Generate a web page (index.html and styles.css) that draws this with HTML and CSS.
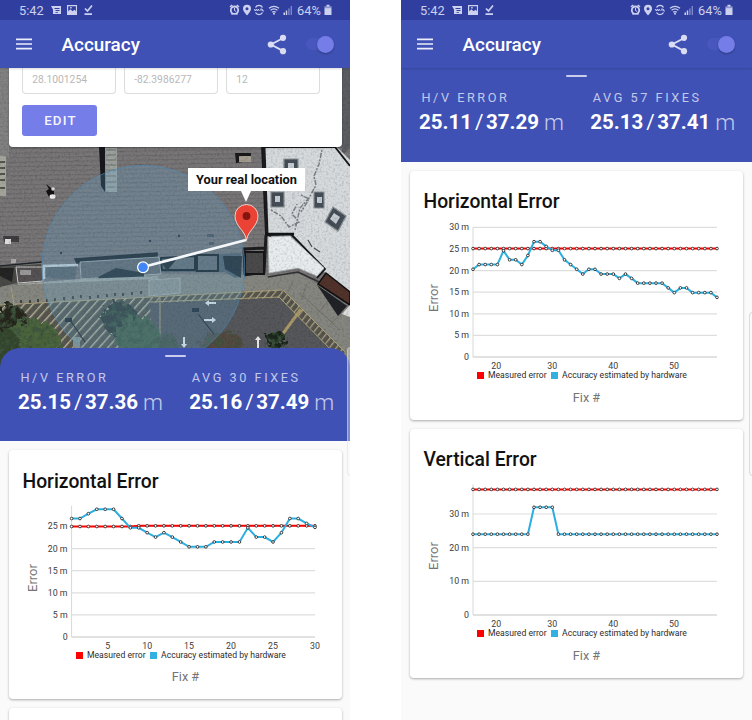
FILE: index.html
```
<!DOCTYPE html>
<html lang="en">
<head>
<meta charset="utf-8">
<title>Accuracy</title>
<link rel="stylesheet" href="styles.css">
</head>
<body>
<svg class="defs" width="0" height="0" aria-hidden="true">
  <symbol id="i-left" viewBox="0 0 42 12">
    <path d="M0 2h10v8H2V5.500zM3.500 4v1h5V4zm1 2v.9h4V6zm0 1.900v.8h2.500v-.8z" fill="currentColor" fill-rule="evenodd"/>
    <path d="M16 1h10v10H16zM17.200 2.200v5l2.300-2 2 2 2-1.500 1.400 1.500v-5zM19.200 3h1.500v1.500h-1.500z" fill="currentColor" fill-rule="evenodd"/>
    <path d="M34 4.500l2.500 2.500L41 1.500M33.500 10.200H41" fill="none" stroke="currentColor" stroke-width="1.700"/>
  </symbol>
  <symbol id="i-right" viewBox="0 0 66 12">
    <g fill="none" stroke="currentColor">
      <circle cx="5.500" cy="6.200" r="3.700" stroke-width="1.800"/>
      <path d="M1 3l2.200-2M10 3L7.800 1M2.500 10.500l1-1M8.500 10.500l-1-1" stroke-width="1.600"/>
      <path d="M5.500 4v2.500l1.700 1" stroke-width="1"/>
    </g>
    <path d="M18 .7a4 4 0 0 1 4 4C22 7.500 18 11.300 18 11.300s-4-3.800-4-6.600a4 4 0 0 1 4-4zm0 2.500a1.500 1.500 0 1 0 0 3 1.500 1.500 0 0 0 0-3z" fill="currentColor" fill-rule="evenodd"/>
    <g fill="none" stroke="currentColor">
      <path d="M26.500 3.500a4 4 0 0 1 7 0M33.500 8.500a4 4 0 0 1-7 0" stroke-width="1.300"/>
      <path d="M25.300 5l1 2 1-2 1 2 1-2 1 2M31.200 5h1.800m-1 0v2M33.600 5v2h1.400" stroke-width=".9"/>
      <path d="M40 4.300q5-4 10 0M41.600 6.300q3.400-2.700 6.800 0M43.200 8.200q1.800-1.300 3.600 0" stroke-width="1.200"/>
    </g>
    <circle cx="45" cy="9.800" r="1" fill="currentColor"/>
    <path d="M54.500 8.500H56V11h-1.500zM56.800 6.500h1.400V11h-1.400z" fill="currentColor"/>
    <path d="M59.200 4.500h1.400V11h-1.400zM61.600 2H63v9h-1.400z" fill="currentColor" opacity=".5"/>
  </symbol>
  <symbol id="i-battery" viewBox="0 0 8 12">
    <path d="M2.500.8h3v1.700h2V11h-7V2.500h2z" fill="currentColor"/>
    <path d="M.5 2.500h7v1.700h-7z" fill="#303f9f" opacity=".4"/>
  </symbol>
  <symbol id="i-menu" viewBox="0 0 16 12">
    <path d="M0 1.300h16M0 6h16M0 10.700h16" stroke="currentColor" stroke-width="1.700"/>
  </symbol>
  <symbol id="i-share" viewBox="0 0 20 21">
    <path d="M16.300 4L4 10.500l12.300 6.700" fill="none" stroke="currentColor" stroke-width="1.900"/>
    <g fill="currentColor"><circle cx="16" cy="3.800" r="3.100"/><circle cx="3.800" cy="10.500" r="3.100"/><circle cx="16" cy="17.200" r="3.100"/></g>
  </symbol>
</svg>

<main class="stage">
  <section class="phone">
    <div class="status">
      <span class="time">5:42</span><svg class="st-left"><use href="#i-left"/></svg>
      <svg class="st-right"><use href="#i-right"/></svg><span class="pct">64%</span><svg class="st-batt"><use href="#i-battery"/></svg>
    </div>
    <header class="bar">
      <svg class="menu"><use href="#i-menu"/></svg><h1>Accuracy</h1>
      <svg class="share"><use href="#i-share"/></svg><span class="switch"><i></i></span>
    </header>
    <div class="map-area">
      <svg class="map" viewBox="0 68 350 300" width="350" height="300">
        <defs>
          <pattern id="roof" width="8" height="4.500" patternUnits="userSpaceOnUse" patternTransform="rotate(-1)">
            <rect width="8" height="4.500" fill="#777576"/><rect width="8" height="1" fill="#6c6a6c"/><rect y="2.500" width="8" height=".6" fill="#7d7b7b"/>
          </pattern>
          <pattern id="bays" width="6.500" height="8" patternUnits="userSpaceOnUse" patternTransform="rotate(42)">
            <rect width="6.500" height="8" fill="#57564f"/><rect width="1.400" height="8" fill="#b5b298"/>
          </pattern>
          <pattern id="kerb" width="5.500" height="8" patternUnits="userSpaceOnUse" patternTransform="rotate(38)">
            <rect width="5.500" height="8" fill="#55544d"/><rect width="1.300" height="8" fill="#aaa183"/>
          </pattern>
          <filter id="grain" x="0" y="0" width="100%" height="100%">
            <feTurbulence type="fractalNoise" baseFrequency=".45" numOctaves="3" seed="4"/>
            <feColorMatrix values="0 0 0 0 0  0 0 0 0 0  0 0 0 0 0  1.600 0 0 0 -.7"/>
          </filter>
          <filter id="leaf" x="-10%" y="-10%" width="120%" height="120%">
            <feTurbulence type="fractalNoise" baseFrequency=".18" numOctaves="3" seed="9" result="n"/>
            <feDisplacementMap in="SourceGraphic" in2="n" scale="16" result="d"/>
            <feColorMatrix in="n" values="0 0 0 0 .05  0 0 0 0 .09  0 0 0 0 .05  3.500 0 0 0 -1.600"/>
            <feComposite operator="in" in2="d" result="s"/>
            <feMerge><feMergeNode in="d"/><feMergeNode in="s"/></feMerge>
          </filter>
        </defs>
        <rect y="68" width="350" height="300" fill="url(#roof)"/>
        <rect y="68" width="9" height="90" fill="#8a8a8b" opacity=".6"/>
        <path d="M342 68h8v80l-8 8z" fill="#5c5d60"/>
        <!-- walkway and car park -->
        <path d="M0 286L150 274 272 275 300 274 318 284 350 312V368H0z" fill="#85867f"/>
        <path d="M0 305L152 297 158 368H0z" fill="url(#bays)"/>
        <path d="M150 296l133-2 52 56v18H152z" fill="#56575b"/>
        <path d="M150 297l133-7 62 62-6 5-60-59-129 5z" fill="url(#kerb)"/>
        <path d="M150 297l133-7 62 62M150 302l129-5 57 58M0 305l151-8M160 298v38M11 287l3 18" fill="none" stroke="#aaa17b" stroke-width="1"/>
        <path d="M301 309l-19 26" stroke="#aa9968" stroke-width="3"/>
        <path d="M293 282l-5 10M307 284l-6 16M329 300l-13 15M342 312l-14 15M300 293l40 37" stroke="#6d6c65" stroke-width=".8"/>
        <path d="M21 300v3M30 300v3M38 299v3M47 299v3M55 298v3M64 297v3M73 296v3M81 295v3M90 296v3M98 295v3M107 294v3M115 293v3M123 293v3M132 292v3M141 291v3" stroke="#2a2a2a" stroke-width="1.400"/>
        <!-- white roof block -->
        <path d="M262 144h72l16 16v137l-24-23-34-39-25-2z" fill="#d6dadd"/>
        <path d="M262 147h73l15 19M262 147l4 88 25-1 34 35-8 9" fill="none" stroke="#151719" stroke-width="1.800"/>
        <path d="M264 148l3 86M266 235l-2 37-20 3M245 275l-1-26 20-1" fill="none" stroke="#1c1c1e" stroke-width="3"/>
        <path d="M268 237l22-1 34 32-7 8-19-8-29 5z" fill="#e9ecee" stroke="#b2b7bb" stroke-width=".8"/>
        <path d="M268 277l30-5 21 10 31 22" fill="none" stroke="#303132" stroke-width="1.600"/>
        <path d="M326 273l24 19v13l-32-21z" fill="#51332b" stroke="#111" stroke-width="1.500"/>
        <path d="M317 285l30 21-9 10z" fill="#202227"/>
        <path d="M342 314l8-9v12z" fill="#ddd"/>
        <g fill="#454d56" stroke="#8a9198" stroke-width="1.200">
          <path d="M284 159h14v13h-14zM271 192h13v15h-13zM314 192h10v16h-10zM333 207l13 9-8 15-13-9z"/>
        </g>
        <g fill="#c4cbd1"><path d="M288 163h6v5h-6zM275 196h5v6h-5zM317 197h5v6h-5zM334 213l6 4-4 7-6-5zM292 193h3v6h-3z"/></g>
        <g fill="none" stroke="#7d8287" stroke-width="1.500" stroke-dasharray="2 1 5 1.500">
          <path d="M322 150l-3 14-5 12 2 9-7 13-9 10-5 22M271 210l10 6 8 11 10-5-7-8 5-10M301 195l8 4-8 13"/>
        </g>
        <path d="M267 234h27M271 236l-5-3" stroke="#121416" stroke-width="2.500"/>
        <path d="M308 240l4 7M314 248l6 4" stroke="#4a4e52" stroke-width="1.200"/>
        <!-- storefront -->
        <path d="M0 267l41-3 1 15-26 4-16 4z" fill="#494946"/>
        <path d="M16 267h27v14l-25 2z" fill="#565253" stroke="#c8cbc8" stroke-width="1"/>
        <path d="M20 270h11v5H20z" fill="#999"/>
        <path d="M0 268h14l-2 14-12-6z" fill="#252424"/>
        <path d="M44 266l33-2-2 16-31-3z" fill="#5c6469"/>
        <path d="M44 279v-13l34-1" fill="none" stroke="#c6d0d0" stroke-width="2.500"/>
        <path d="M75 259l82-6v4l-80 6zM0 266l42-4" fill="#22282c" stroke="#20252a" stroke-width="1.500"/>
        <path d="M80 262l79-5 2 17-80 5z" fill="#65686c" stroke="#b0b7b9" stroke-width=".8"/>
        <path d="M98 277l18-9 28 5v5l-44 2z" fill="#293137"/>
        <path d="M161 258l80-5v23l-6 2-10-6H161z" fill="#536068"/>
        <path d="M161 258l34-2v14h-33zM197 255h21v16h-21z" fill="#666c70" stroke="#1b2227" stroke-width="2"/>
        <path d="M161 262l15-2-9 11zM223 256h19l-1 22-16-9z" fill="#232a30"/>
        <path d="M245 252h19v22h-19z" fill="#4b4a4b" stroke="#171719" stroke-width="2"/>
        <path d="M18 284l61-5 79-3v3l-79 3-62 3z" fill="#a0a4a0"/>
        <path d="M149 280l31-2v15l-31 3z" fill="#8f928e" stroke="#b0b3ae" stroke-width=".8"/>
        <!-- rooftop equipment -->
        <path d="M99 147h6v45l-4-6z" fill="#16181c"/><path d="M105 148h12v44h-11z" fill="#9da19e"/>
        <path d="M106 150h10M106 155h10M106 160h10M106 165h10M106 170h10M106 176h10M106 182h10M108 187h7" stroke="#6c726f" stroke-width="1.200"/>
        <path d="M0 156h6v40H0z" fill="#a5a69b"/><path d="M0 162h5M0 168h5M0 174h5M0 180h5M0 188h5" stroke="#3c3d39" stroke-width="1.400"/>
        <path d="M46 184l5 4 3 2v8l-5-1-3-6 3-2z" fill="#111"/><ellipse cx="52.500" cy="196.500" rx="3" ry="2.300" fill="#eee"/><circle cx="53" cy="189" r="1.800" fill="#ddd"/>
        <path d="M3 236h16v6H4z" fill="#26272a" opacity=".7"/><path d="M5 239h6v5H5z" fill="#ddd"/><path d="M11 259h5v4h-5z" fill="#aaa"/>
        <path d="M235 153h16v8l-15 2z" fill="#1b1a1b"/><path d="M239 156h12v6h-12z" fill="#a69e91"/>
        <g fill="#2b3036"><circle cx="61" cy="253" r="1.200"/><circle cx="150" cy="241" r="1.200"/><circle cx="179" cy="236" r="1.200"/></g>
        <path d="M207 234h7v3h-7zM209 242h5v3h-5z" fill="#4d545a"/>
        <!-- planting -->
        <g filter="url(#leaf)">
          <ellipse cx="10" cy="320" rx="17" ry="15" fill="#26251f"/><ellipse cx="32" cy="341" rx="29" ry="21" fill="#4b653d"/><ellipse cx="4" cy="348" rx="16" ry="20" fill="#34472d"/>
          <ellipse cx="120" cy="319" rx="18" ry="17" fill="#343a38"/><ellipse cx="137" cy="337" rx="23" ry="21" fill="#48624a"/><ellipse cx="168" cy="344" rx="10" ry="10" fill="#4b5348"/>
          <ellipse cx="222" cy="344" rx="22" ry="12" fill="#524b43"/><ellipse cx="276" cy="340" rx="10" ry="10" fill="#1f251b"/>
        </g>
        <path d="M70 320l15 22M198 314l16 20" stroke="#252a2d" stroke-width="1.200"/><path d="M65 318h7v4h-7zM192 308h7v4h-7z" fill="#222b31"/>
        <path d="M73 337h7v12h-7z" fill="#88938e"/>
        <g fill="#e5e7e6"><path d="M205 303l4-3v2h7v2h-7v2zM216 320l-4-3v2h-8v2h8v2zM258 336l3 4h-2v9h-2v-9h-2zM184 348l-3-4h2v-7h2v7h2z"/></g>
        <rect y="68" width="350" height="300" filter="url(#grain)" opacity=".2"/>
        <circle cx="143.300" cy="267" r="101.500" fill="#5fa9d6" fill-opacity=".23" stroke="#4d87b4" stroke-width=".8" stroke-opacity=".8"/>
        <path d="M143 267l103-27" stroke="#f5f8fa" stroke-width="2.800"/>
        <circle cx="143" cy="267.300" r="5.400" fill="#4285f4" stroke="#fff" stroke-width="1.200"/>
        <path d="M246.500 240.500c-1-10-11.500-14-11.500-24.500a11.500 11.500 0 0 1 23 0c0 10.500-10.500 14.500-11.500 24.500z" fill="#ea4335" stroke="#f4f1f0" stroke-width=".8"/>
        <circle cx="246.500" cy="216" r="3.900" fill="#84160f"/>
      </svg>
      <div class="callout">Your real location</div>
      <div class="edit-card">
        <div class="fields"><span>28.1001254</span><span>-82.3986277</span><span>12</span></div>
        <button type="button">EDIT</button>
      </div>
    </div>
    <div class="sheet rounded">
      <div class="stat"><small>H/V ERROR</small><p><b>25.15</b><i>/</i><b>37.36</b><em>m</em></p></div>
      <div class="stat"><small>AVG 30 FIXES</small><p><b>25.16</b><i>/</i><b>37.49</b><em>m</em></p></div>
    </div>
    <div class="cards">
      <article class="card"><h2>Horizontal Error</h2><div class="chart" data-chart="h30"></div>
        <div class="legend"><span class="red">Measured error</span><span class="blue">Accuracy estimated by hardware</span></div><div class="xname">Fix #</div></article>
      <article class="card"></article>
    </div>
    <span class="edge edge-left"></span>
  </section>

  <section class="phone">
    <div class="status">
      <span class="time">5:42</span><svg class="st-left"><use href="#i-left"/></svg>
      <svg class="st-right"><use href="#i-right"/></svg><span class="pct">64%</span><svg class="st-batt"><use href="#i-battery"/></svg>
    </div>
    <header class="bar">
      <svg class="menu"><use href="#i-menu"/></svg><h1>Accuracy</h1>
      <svg class="share"><use href="#i-share"/></svg><span class="switch"><i></i></span>
    </header>
    <div class="sheet">
      <div class="stat"><small>H/V ERROR</small><p><b>25.11</b><i>/</i><b>37.29</b><em>m</em></p></div>
      <div class="stat"><small>AVG 57 FIXES</small><p><b>25.13</b><i>/</i><b>37.41</b><em>m</em></p></div>
    </div>
    <div class="cards">
      <article class="card"><h2>Horizontal Error</h2><div class="chart" data-chart="h57"></div>
        <div class="legend"><span class="red">Measured error</span><span class="blue">Accuracy estimated by hardware</span></div><div class="xname">Fix #</div></article>
      <article class="card"><h2>Vertical Error</h2><div class="chart" data-chart="v57"></div>
        <div class="legend"><span class="red">Measured error</span><span class="blue">Accuracy estimated by hardware</span></div><div class="xname">Fix #</div></article>
    </div>
    <span class="edge edge-right"></span>
  </section>
</main>
<script src="app.js"></script>
</body>
</html>
```
FILE: styles.css
```
* { box-sizing: border-box; }
body { margin: 0; background: #fff; font-family: Roboto, "Liberation Sans", sans-serif; overflow: hidden; }
.defs { position: absolute; }
svg { display: block; flex: none; }
h1, h2, p { margin: 0; }
i, em { font-style: normal; }

.stage { display: grid; grid-template-columns: 350px 351px; column-gap: 51px; width: 752px; height: 720px; overflow: hidden; }
.phone { position: relative; display: flex; flex-direction: column; height: 720px; background: #fafafa; overflow: hidden; }

.status { flex: none; display: flex; align-items: center; height: 20px; padding-left: 19px; background: #303f9f; color: #ccd1ef; font-size: 12.800px; }
.time { width: 31.500px; }
.st-left { width: 42px; height: 12px; }
.st-right { width: 66px; height: 12px; margin-left: 136px; }
.pct { width: 25.500px; margin-left: 2.500px; }
.st-batt { width: 8px; height: 12px; margin-left: 1px; }

.bar { position: relative; z-index: 3; flex: none; display: flex; align-items: center; height: 48px; padding-left: 16px; background: #3f51b5; color: #fff; box-shadow: 0 1px 2px rgba(0,0,0,.15); }
.menu { width: 16px; height: 12px; color: #eceefa; }
.bar h1 { width: 206px; margin-left: 29.500px; font-size: 18.900px; font-weight: 500; line-height: 24px; padding-top: 2px; }
.share { width: 20px; height: 21px; margin-left: -1px; color: #d9dcf2; }
.switch { display: flex; justify-content: flex-end; align-items: center; width: 25px; height: 12px; margin-left: 19.500px; border-radius: 6px; background: #4857bd; }
.switch i { flex: none; width: 17px; height: 17px; margin-right: -3px; border-radius: 50%; background: #757de8; box-shadow: 0 1px 2px rgba(0,0,0,.3); }

.map-area { position: relative; flex: none; height: 280px; }
.map { position: absolute; top: 0; left: 0; }
.edit-card { position: absolute; top: 0; left: 8.500px; width: 333px; height: 78.500px; padding: 0 13.700px; background: #fff; border-radius: 0 0 4px 4px; box-shadow: 0 1px 2px rgba(0,0,0,.3); }
.fields { display: flex; gap: 8px; height: 25.500px; }
.fields span { width: 94px; padding: 5px 0 0 9px; border: 1px solid #dcdcdc; border-top: 0; border-radius: 0 0 4px 4px; color: #b8b8b8; font-size: 10.300px; line-height: 13px; }
.edit-card button { display: block; width: 75px; height: 31px; margin: 11.500px 0 0 -.2px; padding: 0 0 0 2px; border: 0; border-radius: 3px; background: #757de8; color: #f5f5ff; font: 500 13.300px Roboto, sans-serif; letter-spacing: 1.200px; }
.callout { position: absolute; top: 100px; left: 188px; width: 117px; height: 23px; background: #fff; color: #111; font-size: 12.800px; font-weight: 700; line-height: 24px; text-align: center; white-space: nowrap; }
.callout::after { content: ""; position: absolute; top: 23px; left: 53px; border: 5.500px solid transparent; border-top: 11px solid #fff; border-bottom: 0; }

.sheet { position: relative; flex: none; display: flex; height: 93.500px; padding: 22px 0 0 18px; background: #3f51b5; }
.sheet::before { content: ""; position: absolute; top: 6.500px; left: 164.500px; width: 21.500px; height: 2.500px; border-radius: 1px; background: #c9cdee; }
.rounded { height: 93px; border-radius: 20px 20px 0 0; }
.stat { flex: none; width: 171.300px; }
.stat small { display: block; padding-left: 2.500px; color: #c3c9eb; font-size: 12.700px; line-height: 15px; letter-spacing: 2.550px; white-space: nowrap; }
.stat p { display: flex; margin-top: 5px; color: #fff; font-size: 20.500px; line-height: 25px; white-space: nowrap; }
.stat b { width: 54px; font-weight: 700; }
.stat i { width: 13px; padding-left: 2px; }
.stat em { margin-left: 4px; color: #c5cae9; font-weight: 300; font-size: 22.500px; }

.cards { display: flex; flex-direction: column; gap: 9px; padding: 9px 0 0 8.500px; }
.card { flex: none; display: flex; flex-direction: column; width: 333px; height: 249px; padding-top: 19.500px; background: #fff; border-radius: 4px; box-shadow: 0 1px 2.500px rgba(0,0,0,.32); }
.card h2 { padding-left: 14px; color: #111; font-size: 19.300px; font-weight: 500; line-height: 24px; white-space: nowrap; }
.chart { height: 156px; padding-left: .5px; }
.chart text { fill: #3c3c3c; font-size: 8.800px; }
.chart .yname { fill: #757575; font-size: 13px; }
.legend { display: flex; height: 11px; padding-left: 67.500px; color: #2c2c2c; font-size: 8.640px; line-height: 11px; white-space: nowrap; }
.legend span { display: flex; align-items: center; gap: 4px; width: 74px; }
.legend span::before { content: ""; flex: none; width: 7px; height: 7px; background: #f00; }
.legend .blue::before { background: #33b0e2; }
.xname { margin-top: 8.500px; padding-left: 21px; color: #757575; font-size: 12.700px; line-height: 16px; text-align: center; }

.edge { position: absolute; z-index: 4; width: 5px; border: 1px solid #dcdcdc; border-right: 0; border-radius: 4px 0 0 4px; background: rgba(250,250,250,.35); }
.edge-left { top: 347px; left: 346.500px; height: 129px; border-color: rgba(220,220,220,.5); }
.edge-right { top: 312px; left: 347.500px; height: 164px; }
```
FILE: app.js
```
const fill = (n, v) => Array(n).fill(v);
const charts = {
  h30: {
    x0: 62.6, width: 243.4, unit: 4.42, top: 29.7, step: 5, last: 25,
    red: [...fill(8, 25.0), ...fill(22, 25.15)],
    blue: [26.8, 26.8, 27.9, 28.9, 28.9, 28.9, 26.8, 24.7, 24.7, 23.6, 22.6, 23.6, 22.6, 21.5, 20.4, 20.4, 20.4,
      21.5, 21.5, 21.5, 21.5, 24.7, 22.6, 22.6, 21.5, 23.6, 26.8, 26.8, 25.7, 24.8],
    ticks: [[5, 98.7], [10, 138.3], [15, 180], [20, 222], [25, 264], [30, 306]]
  },
  h57: {
    x0: 63, width: 244, unit: 4.32, top: 30, step: 5, last: 30,
    red: fill(41, 25.1),
    blue: [20.3, 21.4, 21.4, 21.4, 21.4, 24.6, 22.5, 22.5, 21.4, 23.5, 26.7, 26.7, 25.6, 24.7, 24.7, 22.5, 21.4,
      20.3, 19.2, 20.3, 20.3, 19.2, 19.2, 19.2, 18.2, 19.2, 18.2, 17.1, 17.1, 17.1, 17.1, 17.1, 16, 14.9, 16, 16,
      14.9, 14.9, 14.9, 14.9, 13.8],
    ticks: [[20, 86.3], [30, 142.3], [40, 203.3], [50, 264]]
  },
  v57: {
    x0: 63, width: 244, unit: 3.367, top: 38.8, step: 10, last: 30,
    red: fill(41, 37.3),
    blue: [...fill(10, 24), ...fill(4, 32), ...fill(27, 24)],
    ticks: [[20, 86.3], [30, 142.3], [40, 203.3], [50, 264]]
  }
};

const base = 143;
for (const el of document.querySelectorAll('[data-chart]')) {
  const c = charts[el.dataset.chart];
  const right = c.x0 + c.width;
  const px = i => (c.x0 + i * c.width / (c.red.length - 1)).toFixed(2);
  const py = v => (base - v * c.unit).toFixed(2);
  let s = '<svg width="332" height="156" viewBox="0 0 332 156">';
  for (let v = 0; v <= c.last; v += c.step) {
    s += `<path d="M${c.x0} ${py(v)}H${right}" stroke="${v ? '#dedede' : '#c4c4c4'}" stroke-width="1.2"/>`;
    s += `<text x="${c.x0 - 4}" y="${+py(v) + 2.9}" text-anchor="end">${v ? v + ' m' : 0}</text>`;
  }
  s += `<path d="M${c.x0} ${py(c.top)}V${base}" stroke="#d8d8d8"/>`;
  for (const [label, x] of c.ticks) s += `<text x="${x}" y="154.500" text-anchor="middle">${label}</text>`;
  s += '<text class="yname" text-anchor="middle" transform="translate(27.500 84) rotate(-90)">Error</text>';
  for (const [data, color] of [[c.red, '#f00'], [c.blue, '#2baee0']]) {
    s += `<polyline points="${data.map((v, i) => px(i) + ',' + py(v)).join(' ')}" fill="none" stroke="${color}" stroke-width="2"/>`;
    s += data.map((v, i) => `<circle cx="${px(i)}" cy="${py(v)}" r="1.35" fill="#fff" stroke="#222" stroke-width=".85"/>`).join('');
  }
  el.innerHTML = s + '</svg>';
}
```
